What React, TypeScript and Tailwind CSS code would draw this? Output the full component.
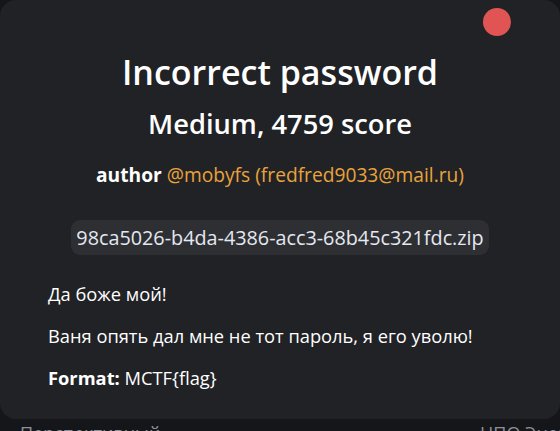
export default function App() {
  return (
    <div
      className="w-[560px] h-[431px] overflow-hidden bg-[#151619] flex flex-col"
      style={{ fontFamily: '"Open Sans", "Noto Sans", sans-serif' }}
    >
      <div className="relative h-[419px] shrink-0 rounded-[16px] bg-[#212226] text-white">
        <button className="absolute top-[8px] right-[49px] w-[28px] h-[28px] rounded-full bg-[#e05454]" />

        <div className="flex flex-col items-center pt-[50px]">
          <h1 className="text-[34px] leading-[44px] font-semibold">Incorrect password</h1>
          <h2 className="mt-[12px] text-[27.3px] leading-[36px] font-semibold">Medium, 4759 score</h2>
          <p className="mt-[20px] text-[19.2px] leading-[26px]">
            <span className="font-bold">author</span>{' '}
            <span className="text-[#e8a23c]">@mobyfs (fredfred9033@mail.ru)</span>
          </p>
          <div className="mt-[32px] h-[35px] px-[5px] flex items-center rounded-[9px] bg-[#2e2f33] text-[19.8px] text-[#e4e8f0]">
            98ca5026-b4da-4386-acc3-68b45c321fdc.zip
          </div>
        </div>

        <div className="px-[48px] mt-[26px] text-[18.3px] leading-[26px] flex flex-col gap-[16px]">
          <p>Да боже мой!</p>
          <p>Ваня опять дал мне не тот пароль, я его уволю!</p>
          <p>
            <span className="font-bold">Format:</span> MCTF{'{'}flag{'}'}
          </p>
        </div>
      </div>

      <div className="relative h-[12px] text-[18px] leading-[26px] text-[#8e919a]">
        <div className="absolute left-[6px] top-[1px] flex items-center gap-[10px] whitespace-nowrap">
          <span className="w-[4px] h-[4px] rounded-full bg-[#8e919a]" />
          <span>Перспективный</span>
        </div>
        <div className="absolute left-[462px] top-[1px] flex items-center gap-[14px] whitespace-nowrap">
          <span className="w-[4px] h-[4px] rounded-full bg-[#8e919a]" />
          <span>НПО Энергия</span>
        </div>
      </div>
    </div>
  );
}
